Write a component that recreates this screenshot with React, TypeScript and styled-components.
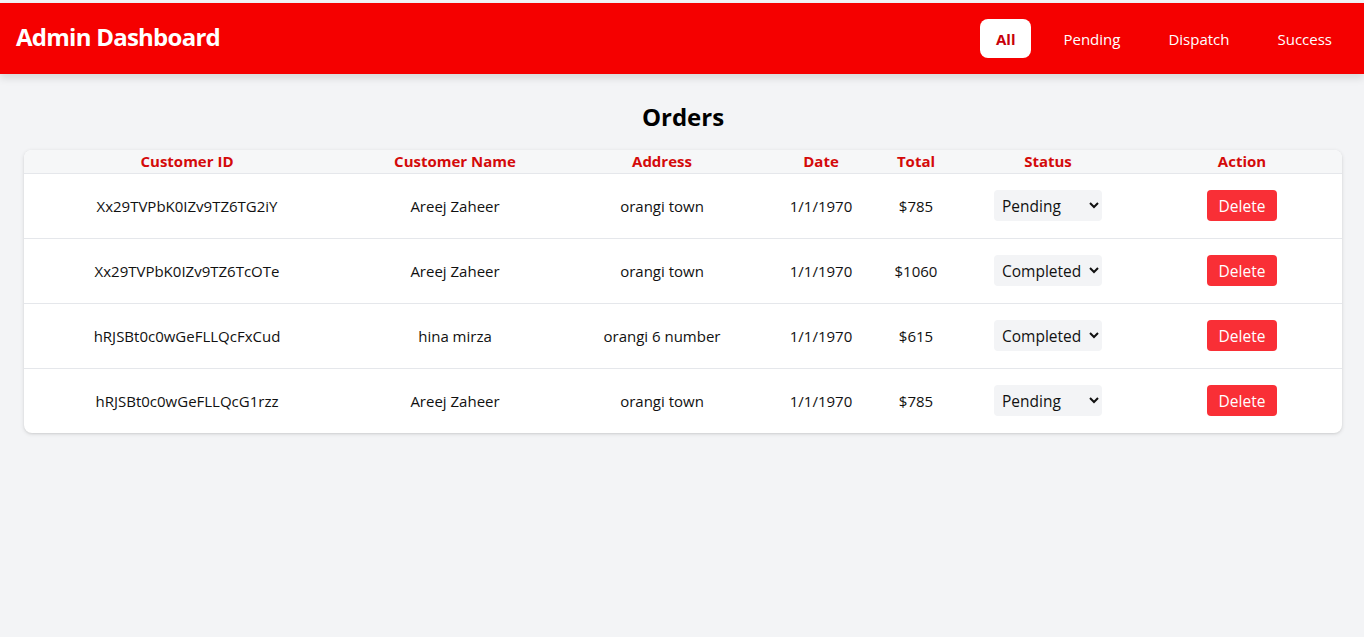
import React from "react";
import styled, { createGlobalStyle } from "styled-components";

const Global = createGlobalStyle`
  html, body { margin: 0; padding: 0; }
  body {
    background: #f3f4f6;
    font-family: "Open Sans", "Noto Sans", sans-serif;
    color: #111;
  }
  * { box-sizing: border-box; }
`;

const Page = styled.div`
  min-height: 637px;
  padding-top: 3px;
  background: #f3f4f6;
`;

const Header = styled.header`
  background: #f50000;
  display: flex;
  align-items: center;
  justify-content: space-between;
  height: 71px;
  padding: 0 16px;
  box-shadow: 0 4px 8px rgba(0, 0, 0, 0.12);
`;

const Brand = styled.h1`
  margin: 0 0 4px;
  color: #fff;
  font-size: 24px;
  font-weight: 700;
  letter-spacing: -0.75px;
`;

const Tabs = styled.nav`
  display: flex;
  gap: 16px;
`;

const Tab = styled.button<{ $active?: boolean }>`
  border: none;
  border-radius: 8px;
  padding: 8px 16px;
  height: 39px;
  font-family: inherit;
  font-size: 15px;
  font-weight: ${(p) => (p.$active ? 700 : 400)};
  background: ${(p) => (p.$active ? "#fff" : "transparent")};
  color: ${(p) => (p.$active ? "#c8000a" : "#fff")};
  cursor: pointer;
`;

const Main = styled.main`
  padding: 25px 22px 0 24px;
`;

const Title = styled.h2`
  margin: 0 0 15px;
  text-align: center;
  font-size: 24px;
  font-weight: 700;
  color: #000;
  line-height: 36px;
`;

const Card = styled.div`
  background: #fff;
  border-radius: 8px;
  box-shadow: 0 1px 4px rgba(0, 0, 0, 0.12), 0 1px 2px rgba(0, 0, 0, 0.06);
  overflow: hidden;
`;

const Table = styled.table`
  width: 100%;
  border-collapse: collapse;
  table-layout: fixed;
`;

const Th = styled.th`
  background: #f6f7f8;
  color: #d40a0a;
  font-size: 15px;
  font-weight: 700;
  text-align: center;
  padding: 0;
  height: 23px;
  line-height: 20px;
  border-bottom: 1px solid #e5e7eb;
`;

const Tr = styled.tr`
  & + & td { border-top: 1px solid #e5e7eb; }
`;

const Td = styled.td`
  text-align: center;
  font-size: 15px;
  padding: 0 8px;
  height: 65px;
  color: #111;
`;

const Select = styled.select`
  width: 108px;
  height: 31px;
  border: none;
  border-radius: 4px;
  background: #f3f4f6;
  font-family: inherit;
  font-size: 15.5px;
  color: #111;
  padding: 0 4px;
`;

const DeleteButton = styled.button`
  background: #f92f36;
  color: #fff;
  border: none;
  border-radius: 4px;
  height: 31px;
  padding: 0 12px;
  font-family: inherit;
  font-size: 15.5px;
  cursor: pointer;
`;

const orders = [
  { id: "Xx29TVPbK0IZv9TZ6TG2iY", name: "Areej Zaheer", address: "orangi town", date: "1/1/1970", total: "$785", status: "Pending" },
  { id: "Xx29TVPbK0IZv9TZ6TcOTe", name: "Areej Zaheer", address: "orangi town", date: "1/1/1970", total: "$1060", status: "Completed" },
  { id: "hRJSBt0c0wGeFLLQcFxCud", name: "hina mirza", address: "orangi 6 number", date: "1/1/1970", total: "$615", status: "Completed" },
  { id: "hRJSBt0c0wGeFLLQcG1rzz", name: "Areej Zaheer", address: "orangi town", date: "1/1/1970", total: "$785", status: "Pending" },
];

const widths = [326, 210, 204, 114, 76, 188, 200];

export default function App() {
  return (
    <Page>
      <Global />
      <Header>
        <Brand>Admin Dashboard</Brand>
        <Tabs>
          <Tab $active>All</Tab>
          <Tab>Pending</Tab>
          <Tab>Dispatch</Tab>
          <Tab>Success</Tab>
        </Tabs>
      </Header>
      <Main>
        <Title>Orders</Title>
        <Card>
          <Table>
            <colgroup>
              {widths.map((w, i) => (
                <col key={i} style={{ width: w }} />
              ))}
            </colgroup>
            <thead>
              <tr>
                <Th>Customer ID</Th>
                <Th>Customer Name</Th>
                <Th>Address</Th>
                <Th>Date</Th>
                <Th>Total</Th>
                <Th>Status</Th>
                <Th>Action</Th>
              </tr>
            </thead>
            <tbody>
              {orders.map((o) => (
                <Tr key={o.id}>
                  <Td>{o.id}</Td>
                  <Td>{o.name}</Td>
                  <Td>{o.address}</Td>
                  <Td>{o.date}</Td>
                  <Td>{o.total}</Td>
                  <Td>
                    <Select defaultValue={o.status}>
                      <option>Pending</option>
                      <option>Dispatch</option>
                      <option>Completed</option>
                    </Select>
                  </Td>
                  <Td>
                    <DeleteButton>Delete</DeleteButton>
                  </Td>
                </Tr>
              ))}
            </tbody>
          </Table>
        </Card>
      </Main>
    </Page>
  );
}
